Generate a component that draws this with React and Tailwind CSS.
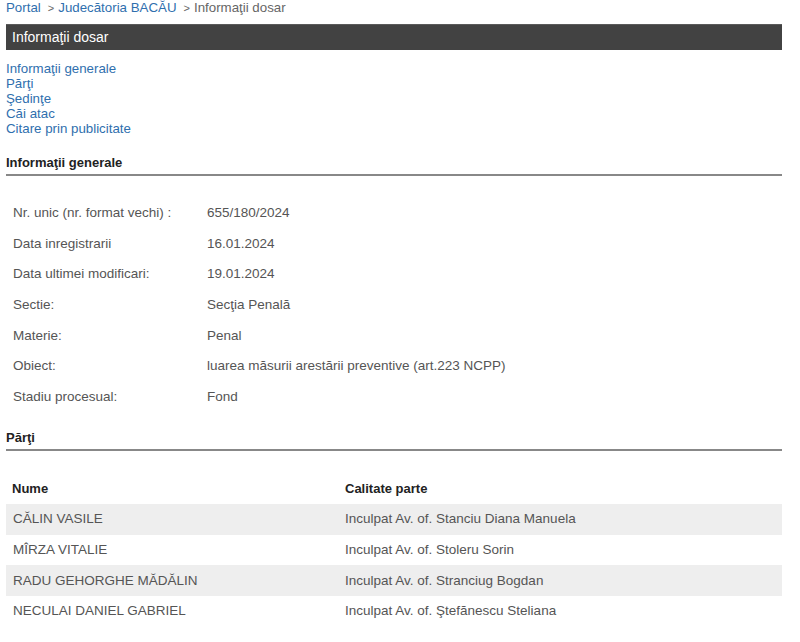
import React from "react";

const info = [
  ["Nr. unic (nr. format vechi) :", "655/180/2024"],
  ["Data inregistrarii", "16.01.2024"],
  ["Data ultimei modificari:", "19.01.2024"],
  ["Sectie:", "Secţia Penală"],
  ["Materie:", "Penal"],
  ["Obiect:", "luarea măsurii arestării preventive (art.223 NCPP)"],
  ["Stadiu procesual:", "Fond"],
];

const parti = [
  ["CĂLIN VASILE", "Inculpat Av. of. Stanciu Diana Manuela"],
  ["MÎRZA VITALIE", "Inculpat Av. of. Stoleru Sorin"],
  ["RADU GEHORGHE MĂDĂLIN", "Inculpat Av. of. Stranciug Bogdan"],
  ["NECULAI DANIEL GABRIEL", "Inculpat Av. of. Ştefănescu Steliana"],
];

export default function App() {
  return (
    <div className="w-[800px] h-[642px] bg-white overflow-hidden font-['Liberation_Sans',Arial,sans-serif]">
      <div className="ml-[6px] w-[776px]">
        <div className="h-[15px] pt-[1px] flex items-center text-[13.3px] leading-[14px] text-[#666] gap-[4px]">
          <span className="text-[#2f6fae]">Portal</span>
          <span className="text-[11px]">&nbsp;&gt;</span>
          <span className="text-[#2f6fae]">Judecătoria BACĂU</span>
          <span className="text-[11px]">&nbsp;&gt;</span>
          <span>Informaţii dosar</span>
        </div>
        <div className="mt-[9px] h-[26px] bg-[#424242] border-t border-[#5a5a5a] flex items-center px-[6px] text-white text-[14px]">
          Informaţii dosar
        </div>
        <div className="mt-[11px] flex flex-col text-[13.3px] leading-[15px] text-[#2f6fae]">
          <span>Informaţii generale</span>
          <span>Părţi</span>
          <span>Şedinţe</span>
          <span>Căi atac</span>
          <span>Citare prin publicitate</span>
        </div>
        <div className="mt-[17px] h-[20px] flex items-center text-[13px] font-bold text-[#222]">
          Informaţii generale
        </div>
        <div className="mt-[1px] h-[2px] bg-[#888]" />
        <div className="mt-[22px] flex flex-col text-[13.5px] text-[#555]">
          {info.map(([k, v]) => (
            <div key={k} className="h-[30.6px] flex items-center">
              <span className="w-[201px] pl-[7px]">{k}</span>
              <span>{v}</span>
            </div>
          ))}
        </div>
        <div className="mt-[16px] h-[20px] flex items-center text-[13px] font-bold text-[#222]">
          Părţi
        </div>
        <div className="mt-[1px] h-[2px] bg-[#888]" />
        <div className="mt-[23px] flex flex-col text-[13.5px]">
          <div className="h-[30px] flex items-center font-bold text-[13px] text-[#222]">
            <span className="w-[339px] pl-[6px]">Nume</span>
            <span>Calitate parte</span>
          </div>
          {parti.map(([n, c], i) => (
            <div
              key={n}
              className={
                "h-[30.6px] flex items-center text-[#555] " +
                (i % 2 === 0 ? "bg-[#eeeeee]" : "bg-white")
              }
            >
              <span className="w-[339px] pl-[7px]">{n}</span>
              <span>{c}</span>
            </div>
          ))}
        </div>
      </div>
    </div>
  );
}
